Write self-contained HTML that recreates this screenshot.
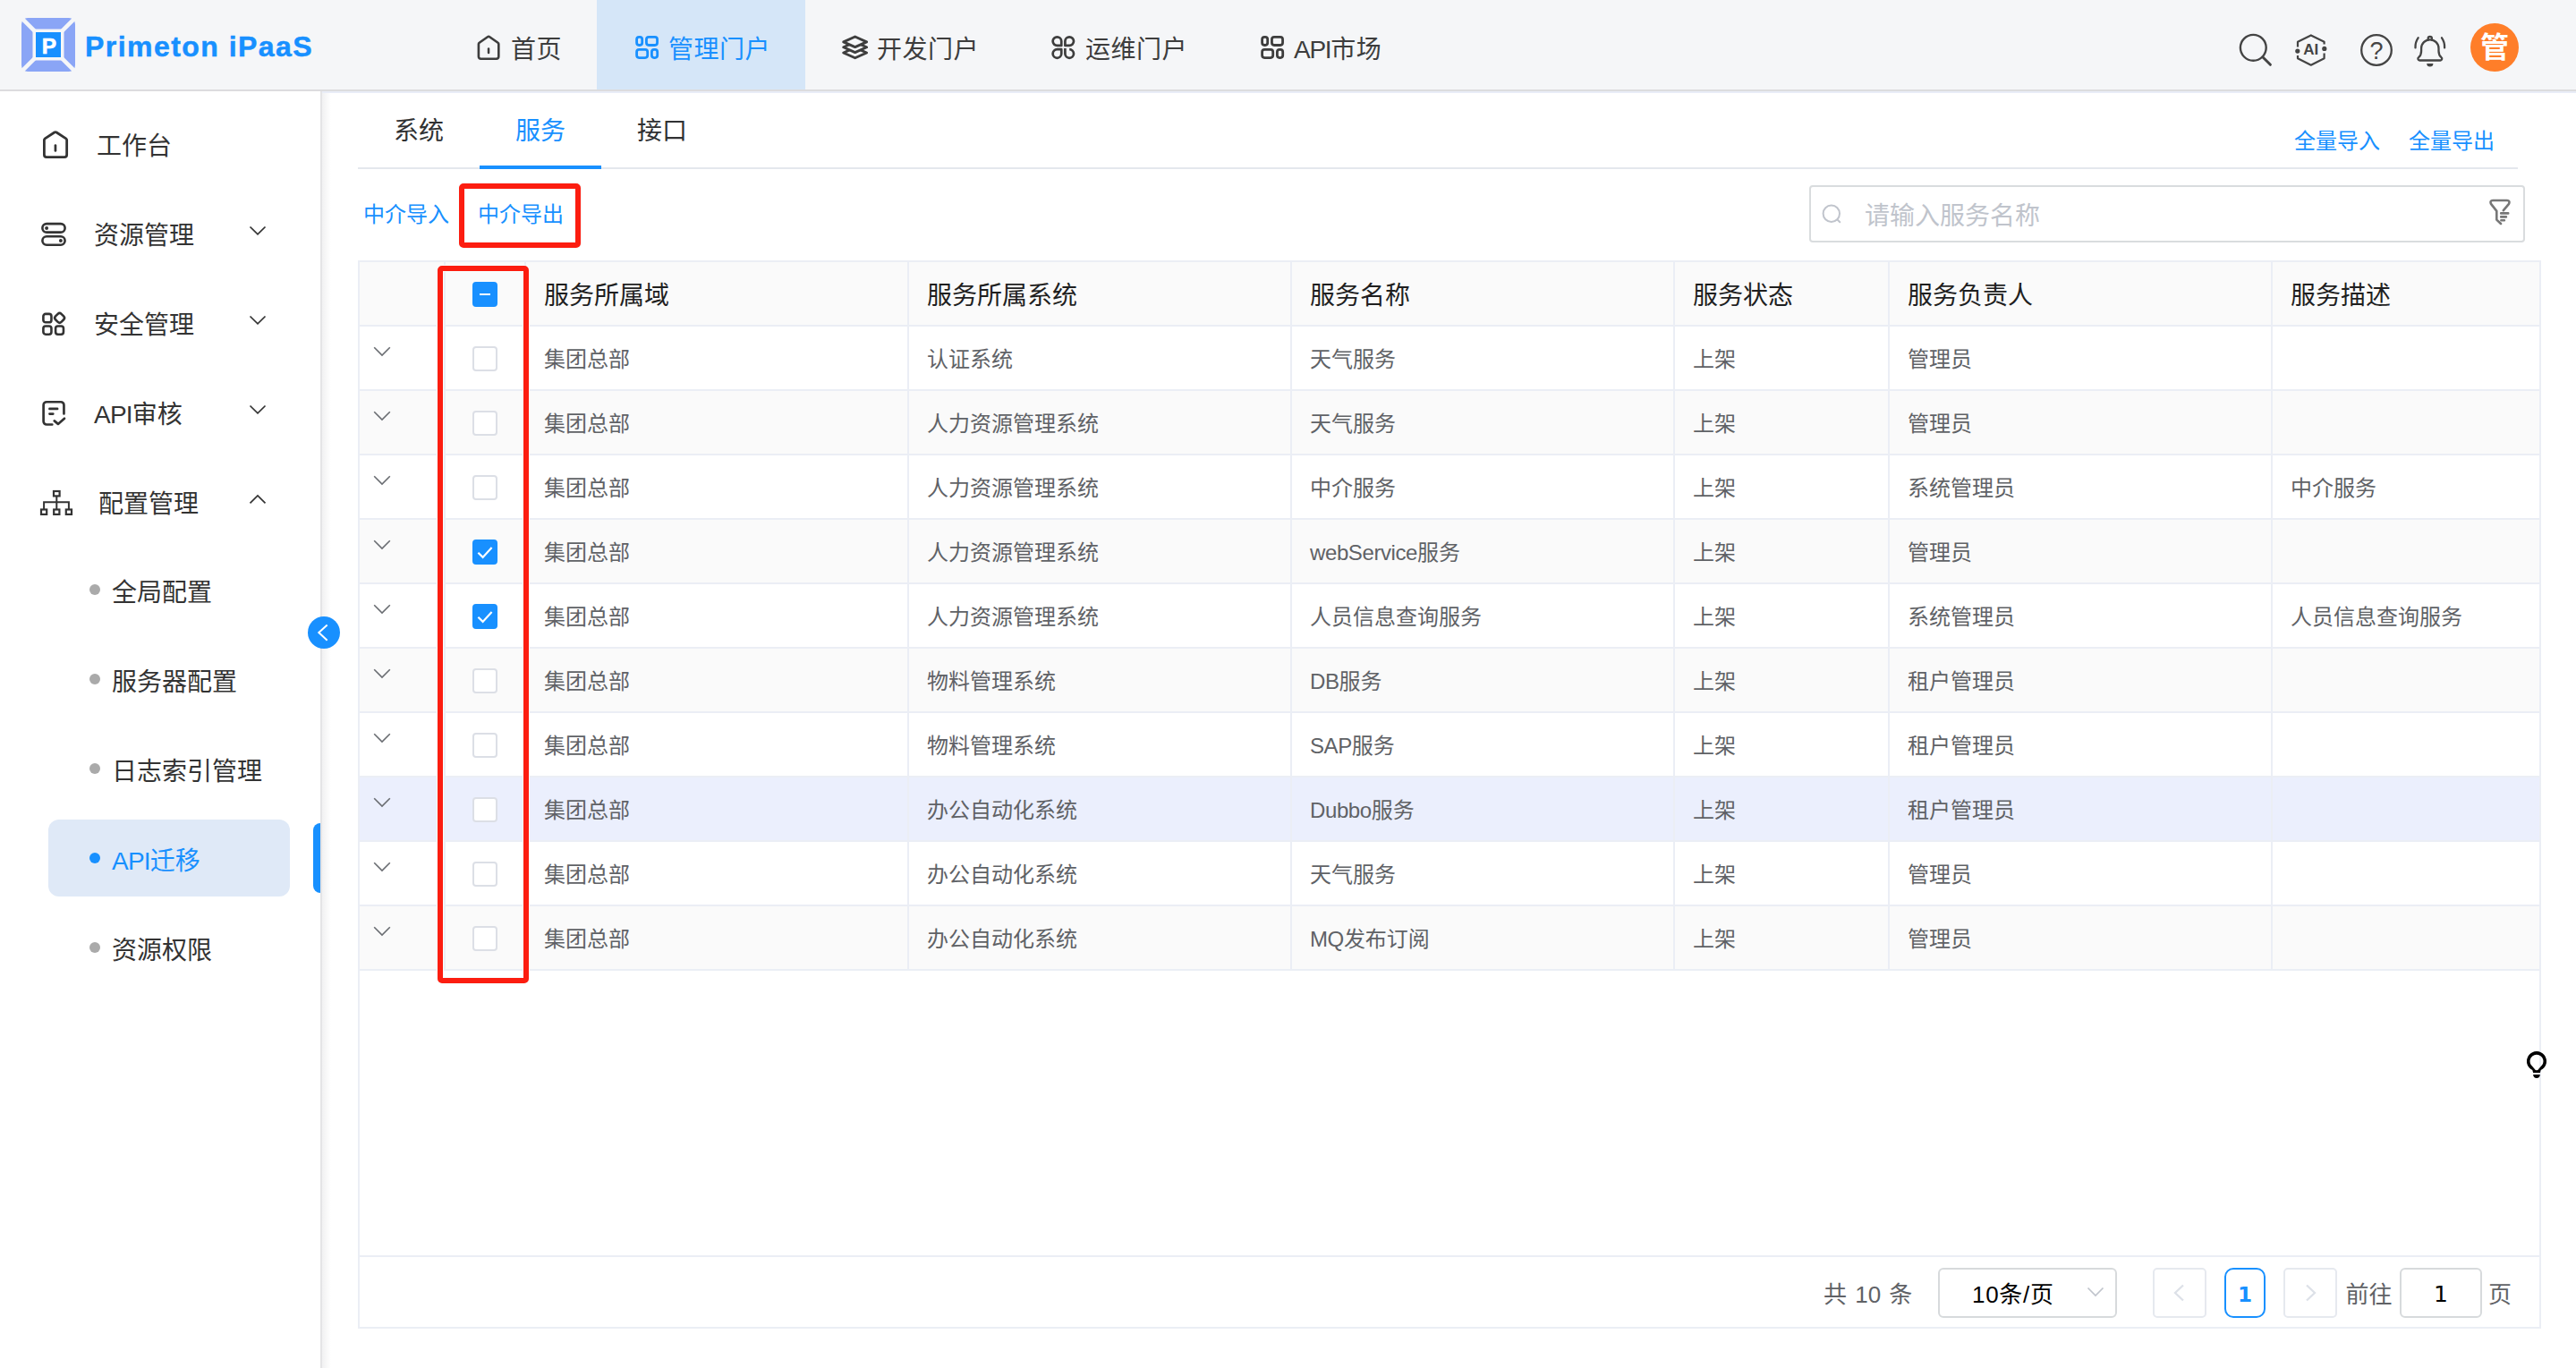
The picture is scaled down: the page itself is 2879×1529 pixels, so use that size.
<!DOCTYPE html>
<html lang="zh-CN">
<head>
<meta charset="utf-8">
<title>Primeton iPaaS</title>
<style>
*{box-sizing:border-box;margin:0;padding:0}
html,body{width:2879px;height:1529px;overflow:hidden;background:#fff}
body{font-family:"Liberation Sans","Noto Sans CJK SC",sans-serif;color:#333;position:relative}
.abs{position:absolute}
#hd{position:absolute;left:0;top:0;width:2879px;height:102px;background:#f5f6f8;border-bottom:2px solid #dcdcde}
#logo{position:absolute;left:24px;top:20px;width:60px;height:60px}
#brand{position:absolute;left:95px;top:27px;height:50px;line-height:50px;font-size:32px;font-weight:bold;color:#1890ff;white-space:nowrap;letter-spacing:1.45px;-webkit-text-stroke:0.5px #1890ff}
.nav{position:absolute;top:0;height:100px;line-height:100px;font-size:28px;color:#3d3d3d;white-space:nowrap}
.nav svg{position:absolute;top:38px;left:41px;width:28px;height:30px;overflow:visible}
.nav span{position:absolute;left:80px;top:6px;letter-spacing:0.5px}
.nav.on{background:#d5e6f8;color:#1890ff}
#sb{position:absolute;left:0;top:102px;width:360px;height:1427px;background:#fff;border-right:2px solid #e4e4e6}
.mi{position:absolute;left:0;width:358px;height:100px;line-height:100px;font-size:28px;color:#333;white-space:nowrap}
.mi .t{position:absolute;left:105px;top:1.5px}
.mi svg.ic{position:absolute;left:44px;top:34px;width:32px;height:32px}
.mi svg.ar{position:absolute;left:278px;top:39.500px;width:20px;height:12px}
.si{position:absolute;left:0;width:358px;height:100px;line-height:100px;font-size:28px;color:#333;white-space:nowrap}
.si .d{position:absolute;left:100px;top:40px;width:12px;height:12px;border-radius:6px;background:#aaa}
.si .t{position:absolute;left:125px;top:0}
#mn{position:absolute;left:360px;top:102px;width:2519px;height:1427px;background:#fff}
.tab{position:absolute;top:122px;height:50px;line-height:50px;font-size:28px;color:#303133;white-space:nowrap}
.lk{position:absolute;font-size:24px;color:#1890ff;white-space:nowrap;height:40px;line-height:40px}
#tbl{position:absolute;left:400px;top:291px;width:2440px;height:1194px;border:2px solid #ebeef5;overflow:hidden;background:#fff}
.tr{position:absolute;left:0;width:2600px;height:72px;background:#fff}
.tr.th{height:72px;background:#fafafa}
.tr.st{background:#fafafa}
.tr.hv{background:#ebeffd}
.td{position:absolute;top:0;height:100%;border-right:2px solid #ebeef5;border-bottom:2px solid #ebeef5;font-size:24px;color:#606266;white-space:nowrap;overflow:hidden}
.td .tx{position:absolute;left:20px;top:1px;height:72px;line-height:72px}
.th .td{font-size:28px;color:#1f1f1f}
.th .td .tx{top:2px;height:72px;line-height:72px}
.cb{position:absolute;left:30px;top:22px;width:28px;height:28px;border:2px solid #dcdfe6;border-radius:4px;background:#fff}

.cb.on,.cb.ind{background:#1890ff;border-color:#1890ff}
.cb.on svg{position:absolute;left:-2px;top:-2px;width:28px;height:28px}
.cb.ind i{position:absolute;left:6px;top:10.800px;width:12px;height:2.500px;background:#fff}
.ex{position:absolute;left:15px;top:22px;width:20px;height:12px}
.red{position:absolute;border:6px solid #fc1d10;border-radius:5px;box-shadow:0 0 0 1px rgba(248,255,255,.9),inset 0 0 0 1px rgba(248,255,255,.9)}
#pg{position:absolute;left:0;top:1110px;width:2436px;height:80px;border-top:2px solid #ebeef5;background:#fff;font-size:26px;color:#606266}
.pb{position:absolute;top:12px;height:56px;border:2px solid #d7dadc;border-radius:6px;background:#fff}
.pt{position:absolute;top:14px;height:56px;line-height:56px;white-space:nowrap}
.la{font-weight:normal;letter-spacing:-0.400px}

</style>
</head>
<body>
<div id="hd">
  <svg id="logo" viewBox="0 0 60 60">
    <rect x="0" y="0" width="60" height="60" rx="7" fill="#8aa5f6"/>
    <path d="M0 0 L60 60 M60 0 L0 60" stroke="#f5f6f8" stroke-width="4.5"/>
    <rect x="12.5" y="12.5" width="35" height="35" fill="#f5f6f8"/>
    <rect x="16" y="16" width="28" height="28" fill="#1890ff"/>
    <text x="31" y="39.800" font-family="Liberation Sans, sans-serif" font-weight="bold" font-size="24.500" fill="#fff" stroke="#fff" stroke-width="0.6" text-anchor="middle">P</text>
  </svg>
  <div id="brand">Primeton iPaaS</div>

  <div class="nav" style="left:491px;width:176px">
    <svg viewBox="0 0 28 30"><path d="M2.900 11.300 Q2.900 10.300 3.700 9.800 L13 3.300 Q14.100 2.550 15.200 3.300 L24.500 9.800 Q25.300 10.300 25.300 11.300 V25.350 a2.400 2.400 0 0 1 -2.400 2.400 H5.300 a2.400 2.400 0 0 1 -2.400 -2.400 Z" fill="none" stroke="#3d3d3d" stroke-width="2.600" stroke-linejoin="round"/><path d="M14.050 16.500 V20.900" stroke="#3d3d3d" stroke-width="2.500" stroke-linecap="round"/></svg>
    <span>首页</span>
  </div>
  <div class="nav on" style="left:667px;width:233px">
    <svg viewBox="0 0 28 30"><g fill="none" stroke="#1890ff" stroke-width="2.800"><rect x="3.600" y="3.400" width="6.100" height="9.100" rx="2.700"/><rect x="14.450" y="3.400" width="12.100" height="9.100" rx="2.700"/><rect x="3.600" y="17.400" width="12.100" height="9.150" rx="2.700"/><rect x="20.400" y="17.400" width="6.300" height="9.150" rx="2.700"/></g></svg>
    <span>管理门户</span>
  </div>
  <div class="nav" style="left:900px;width:233px">
    <svg viewBox="0 0 28 30"><g fill="#f5f6f8" stroke="#3d3d3d" stroke-width="2.900" stroke-linejoin="round"><path d="M14.650 15.150 L27.600 20.950 L14.650 26.750 L1.700 20.950 Z"/><path d="M14.650 9.000 L27.600 14.800 L14.650 20.600 L1.700 14.800 Z"/><path d="M14.650 3.050 L27.600 8.850 L14.650 14.650 L1.700 8.850 Z"/></g></svg>
    <span>开发门户</span>
  </div>
  <div class="nav" style="left:1133px;width:233px">
    <svg viewBox="0 0 28 30"><g fill="none" stroke="#3d3d3d" stroke-width="2.700" stroke-linejoin="round"><path d="M12.250 12.900 H7.450 A4.800 4.800 0 1 1 12.250 8.100 Z"/><path d="M16.400 12.900 V8.100 A4.800 4.800 0 1 1 21.200 12.900 Z"/><path d="M12.250 17.200 V22 A4.800 4.800 0 1 1 7.450 17.200 Z"/><path d="M16.400 15.900 V22 A4.800 4.800 0 1 0 21.200 17.200"/></g></svg>
    <span>运维门户</span>
  </div>
  <div class="nav" style="left:1366px;width:233px">
    <svg viewBox="0 0 28 30"><g fill="none" stroke="#3d3d3d" stroke-width="2.800"><rect x="3.600" y="3.400" width="6.100" height="9.100" rx="2.700"/><rect x="14.450" y="3.400" width="12.100" height="9.100" rx="2.700"/><rect x="3.600" y="17.400" width="12.100" height="9.150" rx="2.700"/><rect x="20.400" y="17.400" width="6.300" height="9.150" rx="2.700"/></g></svg>
    <span><b style="font-weight:normal;letter-spacing:-1.300px">API</b>市场</span>
  </div>

  <!-- right icons -->
  <svg class="abs" style="left:2500px;top:34px;width:44px;height:44px" viewBox="0 0 44 44"><circle cx="18.3" cy="19.3" r="14.4" fill="none" stroke="#444" stroke-width="2.4"/><path d="M28.800 29.800 L37.400 38.300" stroke="#444" stroke-width="3" stroke-linecap="round"/></svg>
  <svg class="abs" style="left:2560px;top:34px;width:44px;height:44px" viewBox="0 0 44 44"><g fill="none" stroke="#444" stroke-width="2.200" stroke-linejoin="round"><path d="M8 18.500 V12.800 L22.800 5.400 L37.600 12.800 V15.500"/><path d="M37.600 25.500 V31.200 L22.800 38.700 L8 31.200 V28"/></g><circle cx="7.800" cy="23.100" r="2.600" fill="#444"/><circle cx="37.800" cy="20.400" r="2.600" fill="#444"/><text x="22.800" y="27" font-family="Liberation Sans, sans-serif" font-weight="bold" font-size="17" fill="#444" text-anchor="middle">AI</text></svg>
  <svg class="abs" style="left:2634px;top:34px;width:44px;height:44px" viewBox="0 0 44 44"><circle cx="22" cy="22" r="16.8" fill="none" stroke="#444" stroke-width="2.3"/><text x="22" y="32" font-family="Liberation Sans, sans-serif" font-size="27" fill="#444" text-anchor="middle">?</text></svg>
  <svg class="abs" style="left:2694px;top:34px;width:44px;height:44px" viewBox="0 0 44 44"><g fill="none" stroke="#444" stroke-width="2.300" stroke-linecap="round" stroke-linejoin="round"><path d="M10.300 33.500 H33.300 a1.900 1.900 0 0 0 1.200 -3.400 c-2.200 -1.800 -3 -3.600 -3 -7.100 V20 a9.700 9.700 0 0 0 -19.400 0 v3 c0 3.500 -0.800 5.300 -3 7.100 A1.900 1.900 0 0 0 10.300 33.500 Z"/><path d="M19.700 10.500 V9 a2.100 2.100 0 0 1 4.200 0 V10.500"/><path d="M8.600 8.300 a17 17 0 0 0 -3.100 11"/><path d="M35 8.300 a17 17 0 0 1 3.100 11"/></g><path d="M18.200 37 h7.200 a3.600 3.600 0 0 1 -7.200 0 Z" fill="#444"/></svg>
  <div class="abs" style="left:2761px;top:26px;width:54px;height:54px;border-radius:27px;background:#ff7e29;color:#fff;font-size:32px;font-weight:bold;line-height:54px;text-align:center">管</div>
</div>

<div id="sb">
  <div class="mi" style="top:10px">
    <svg class="ic" style="left:45px;top:32px;width:34px;height:36px" viewBox="0 0 34 36"><path d="M4.400 12.600 Q4.400 11.500 5.300 10.900 L15.800 4 Q17 3.200 18.200 4 L28.750 10.900 Q29.650 11.500 29.650 12.600 V29.100 a2.500 2.500 0 0 1 -2.500 2.500 H6.900 a2.500 2.500 0 0 1 -2.500 -2.500 Z" fill="none" stroke="#333" stroke-width="2.800" stroke-linejoin="round"/><path d="M16.950 18.500 V24.500" stroke="#333" stroke-width="2.700" stroke-linecap="round"/></svg>
    <span class="t" style="left:108px">工作台</span>
  </div>
  <div class="mi" style="top:110px">
    <svg class="ic" viewBox="0 0 32 32"><g fill="none" stroke="#333" stroke-width="2.600"><rect x="3.400" y="4.150" width="25.200" height="9.450" rx="4.720"/><rect x="3.400" y="18.300" width="25.200" height="9.450" rx="4.720"/></g><circle cx="8.100" cy="8.900" r="2" fill="#333"/><circle cx="23.900" cy="22.900" r="2" fill="#333"/></svg>
    <span class="t">资源管理</span>
    <svg class="ar" viewBox="0 0 20 12"><path d="M1.500 1.500 L10 9.800 L18.500 1.500" fill="none" stroke="#333" stroke-width="1.700"/></svg>
  </div>
  <div class="mi" style="top:210px">
    <svg class="ic" viewBox="0 0 32 32"><g fill="none" stroke="#333" stroke-width="2.600"><rect x="4.400" y="4.850" width="9.050" height="9.450" rx="2.600"/><rect x="18.050" y="4.800" width="9.100" height="9.100" rx="2.700" transform="rotate(45 22.600 9.350)"/><rect x="4.400" y="18.500" width="9.050" height="9.200" rx="2.600"/><rect x="18.100" y="18.500" width="8.850" height="9.200" rx="2.600"/></g></svg>
    <span class="t">安全管理</span>
    <svg class="ar" viewBox="0 0 20 12"><path d="M1.500 1.500 L10 9.800 L18.500 1.500" fill="none" stroke="#333" stroke-width="1.700"/></svg>
  </div>
  <div class="mi" style="top:310px">
    <svg class="ic" viewBox="0 0 32 32"><g fill="none" stroke="#333" stroke-width="2.700" stroke-linecap="round" stroke-linejoin="round"><path d="M14.300 28.500 H8.100 a3.500 3.500 0 0 1 -3.500 -3.500 V6.750 a3.500 3.500 0 0 1 3.500 -3.500 H23.950 a3.500 3.500 0 0 1 3.500 3.500 V16.500"/><path d="M11.450 10.900 H20.100 M11.450 16.600 H15.300"/><path d="M16.750 24.350 L20.900 27.900 L28 21.800"/></g></svg>
    <span class="t"><b style="font-weight:normal;letter-spacing:-0.8px">API</b>审核</span>
    <svg class="ar" viewBox="0 0 20 12"><path d="M1.500 1.500 L10 9.800 L18.500 1.500" fill="none" stroke="#333" stroke-width="1.700"/></svg>
  </div>
  <div class="mi" style="top:410px">
    <svg class="ic" style="left:43px;width:40px;top:33px;height:34px" viewBox="0 0 40 34"><g fill="none" stroke="#333" stroke-width="2.200"><rect x="17" y="4" width="6.600" height="5.400"/><rect x="3" y="24.500" width="6.200" height="5.400"/><rect x="17.200" y="24.500" width="6.200" height="5.400"/><rect x="30.800" y="24.500" width="6.200" height="5.400"/><path d="M20.300 9.400 V24.500 M6.100 24.500 V16.300 H33.900 V24.500" stroke-width="2"/></g></svg>
    <span class="t" style="left:110px">配置管理</span>
    <svg class="ar" viewBox="0 0 20 12"><path d="M1.500 10.300 L10 2 L18.500 10.300" fill="none" stroke="#333" stroke-width="1.700"/></svg>
  </div>
  <div class="si" style="top:511px"><i class="d"></i><span class="t">全局配置</span></div>
  <div class="si" style="top:611px"><i class="d"></i><span class="t">服务器配置</span></div>
  <div class="si" style="top:711px"><i class="d"></i><span class="t">日志索引管理</span></div>
  <div class="abs" style="left:54px;top:814px;width:270px;height:86px;border-radius:12px;background:#dfe9f7"></div>
  <div class="abs" style="left:350px;top:818px;width:8px;height:78px;border-radius:8px 0 0 8px;background:#1890ff"></div>
  <div class="si" style="top:811px;color:#1890ff"><i class="d" style="background:#1890ff"></i><span class="t"><b style="font-weight:normal;letter-spacing:-0.8px">API</b>迁移</span></div>
  <div class="si" style="top:911px"><i class="d"></i><span class="t">资源权限</span></div>
</div>

<div id="mn">
  <div class="abs" style="left:0;top:0;width:2519px;height:2px;background:#e9edf7"></div>
  <div class="abs" style="left:0;top:2px;width:10px;height:1425px;background:linear-gradient(90deg,#f1f1f2,#fff)"></div>
</div>

<!-- tabs -->
<div class="tab" style="left:440px">系统</div>
<div class="tab" style="left:576px;color:#1890ff">服务</div>
<div class="tab" style="left:712px">接口</div>
<div class="abs" style="left:400px;top:187px;width:2414px;height:2px;background:#e4e7ed"></div>
<div class="abs" style="left:536px;top:185px;width:136px;height:4px;background:#1890ff"></div>
<div class="lk" style="left:2564px;top:138px">全量导入</div>
<div class="lk" style="left:2692px;top:138px">全量导出</div>

<div class="lk" style="left:406px;top:220px">中介导入</div>
<div class="lk" style="left:534px;top:220px">中介导出</div>

<!-- search -->
<div class="abs" style="left:2022px;top:207px;width:800px;height:64px;border:2px solid #d9dcde;border-radius:4px;background:#fff">
  <svg class="abs" style="left:10px;top:17px;width:28px;height:28px" viewBox="0 0 28 28"><circle cx="12.800" cy="12.800" r="9.200" fill="none" stroke="#c0c4cc" stroke-width="2"/><path d="M19.500 19.500 L22.300 22.300" stroke="#c0c4cc" stroke-width="2" stroke-linecap="round"/></svg>
  <div class="abs" style="left:60px;top:3px;height:60px;line-height:60px;font-size:28px;color:#c0c4cc;white-space:nowrap">请输入服务名称</div>
  <svg class="abs" style="left:756px;top:12px;width:30px;height:34px" viewBox="0 0 30 34"><g fill="none" stroke="#777" stroke-width="2.600" stroke-linecap="round" stroke-linejoin="round"><path d="M15 29 L10.300 24.600 V14.900 L4 6.900 Q2.500 3 6 3 H22 Q25.500 3 24 6.900 L17.900 14.200"/><path d="M15.200 17.400 H23.200 M15.200 21.400 H20.900 M15.400 25.300 H18.900"/></g></svg>
</div>

<div id="tbl">
<div class="tr th" style="top:0">
<div class="td" style="left:0px;width:96px"></div>
<div class="td" style="left:96px;width:90px"><span class="cb ind"><i></i></span></div>
<div class="td" style="left:186px;width:428px"><span class="tx">服务所属域</span></div>
<div class="td" style="left:614px;width:428px"><span class="tx">服务所属系统</span></div>
<div class="td" style="left:1042px;width:428px"><span class="tx">服务名称</span></div>
<div class="td" style="left:1470px;width:240px"><span class="tx">服务状态</span></div>
<div class="td" style="left:1710px;width:428px"><span class="tx">服务负责人</span></div>
<div class="td" style="left:2138px;width:428px"><span class="tx">服务描述</span></div>
</div>
<div class="tr" style="top:72px">
<div class="td" style="left:0px;width:96px"><svg class="ex" viewBox="0 0 20 12"><path d="M1.2 1.2 L10 10 L18.8 1.2" fill="none" stroke="#6a6d72" stroke-width="1.600"/></svg></div>
<div class="td" style="left:96px;width:90px"><span class="cb"></span></div>
<div class="td" style="left:186px;width:428px"><span class="tx">集团总部</span></div>
<div class="td" style="left:614px;width:428px"><span class="tx">认证系统</span></div>
<div class="td" style="left:1042px;width:428px"><span class="tx">天气服务</span></div>
<div class="td" style="left:1470px;width:240px"><span class="tx">上架</span></div>
<div class="td" style="left:1710px;width:428px"><span class="tx">管理员</span></div>
<div class="td" style="left:2138px;width:428px"><span class="tx"></span></div>
</div>
<div class="tr st" style="top:144px">
<div class="td" style="left:0px;width:96px"><svg class="ex" viewBox="0 0 20 12"><path d="M1.2 1.2 L10 10 L18.8 1.2" fill="none" stroke="#6a6d72" stroke-width="1.600"/></svg></div>
<div class="td" style="left:96px;width:90px"><span class="cb"></span></div>
<div class="td" style="left:186px;width:428px"><span class="tx">集团总部</span></div>
<div class="td" style="left:614px;width:428px"><span class="tx">人力资源管理系统</span></div>
<div class="td" style="left:1042px;width:428px"><span class="tx">天气服务</span></div>
<div class="td" style="left:1470px;width:240px"><span class="tx">上架</span></div>
<div class="td" style="left:1710px;width:428px"><span class="tx">管理员</span></div>
<div class="td" style="left:2138px;width:428px"><span class="tx"></span></div>
</div>
<div class="tr" style="top:216px">
<div class="td" style="left:0px;width:96px"><svg class="ex" viewBox="0 0 20 12"><path d="M1.2 1.2 L10 10 L18.8 1.2" fill="none" stroke="#6a6d72" stroke-width="1.600"/></svg></div>
<div class="td" style="left:96px;width:90px"><span class="cb"></span></div>
<div class="td" style="left:186px;width:428px"><span class="tx">集团总部</span></div>
<div class="td" style="left:614px;width:428px"><span class="tx">人力资源管理系统</span></div>
<div class="td" style="left:1042px;width:428px"><span class="tx">中介服务</span></div>
<div class="td" style="left:1470px;width:240px"><span class="tx">上架</span></div>
<div class="td" style="left:1710px;width:428px"><span class="tx">系统管理员</span></div>
<div class="td" style="left:2138px;width:428px"><span class="tx">中介服务</span></div>
</div>
<div class="tr st" style="top:288px">
<div class="td" style="left:0px;width:96px"><svg class="ex" viewBox="0 0 20 12"><path d="M1.2 1.2 L10 10 L18.8 1.2" fill="none" stroke="#6a6d72" stroke-width="1.600"/></svg></div>
<div class="td" style="left:96px;width:90px"><span class="cb on"><svg viewBox="0 0 28 28"><path d="M6.400 14.700 L11.600 19.900 L21.600 8.900" fill="none" stroke="#fff" stroke-width="2.200"/></svg></span></div>
<div class="td" style="left:186px;width:428px"><span class="tx">集团总部</span></div>
<div class="td" style="left:614px;width:428px"><span class="tx">人力资源管理系统</span></div>
<div class="td" style="left:1042px;width:428px"><span class="tx"><b class="la">webService</b>服务</span></div>
<div class="td" style="left:1470px;width:240px"><span class="tx">上架</span></div>
<div class="td" style="left:1710px;width:428px"><span class="tx">管理员</span></div>
<div class="td" style="left:2138px;width:428px"><span class="tx"></span></div>
</div>
<div class="tr" style="top:360px">
<div class="td" style="left:0px;width:96px"><svg class="ex" viewBox="0 0 20 12"><path d="M1.2 1.2 L10 10 L18.8 1.2" fill="none" stroke="#6a6d72" stroke-width="1.600"/></svg></div>
<div class="td" style="left:96px;width:90px"><span class="cb on"><svg viewBox="0 0 28 28"><path d="M6.400 14.700 L11.600 19.900 L21.600 8.900" fill="none" stroke="#fff" stroke-width="2.200"/></svg></span></div>
<div class="td" style="left:186px;width:428px"><span class="tx">集团总部</span></div>
<div class="td" style="left:614px;width:428px"><span class="tx">人力资源管理系统</span></div>
<div class="td" style="left:1042px;width:428px"><span class="tx">人员信息查询服务</span></div>
<div class="td" style="left:1470px;width:240px"><span class="tx">上架</span></div>
<div class="td" style="left:1710px;width:428px"><span class="tx">系统管理员</span></div>
<div class="td" style="left:2138px;width:428px"><span class="tx">人员信息查询服务</span></div>
</div>
<div class="tr st" style="top:432px">
<div class="td" style="left:0px;width:96px"><svg class="ex" viewBox="0 0 20 12"><path d="M1.2 1.2 L10 10 L18.8 1.2" fill="none" stroke="#6a6d72" stroke-width="1.600"/></svg></div>
<div class="td" style="left:96px;width:90px"><span class="cb"></span></div>
<div class="td" style="left:186px;width:428px"><span class="tx">集团总部</span></div>
<div class="td" style="left:614px;width:428px"><span class="tx">物料管理系统</span></div>
<div class="td" style="left:1042px;width:428px"><span class="tx"><b class="la">DB</b>服务</span></div>
<div class="td" style="left:1470px;width:240px"><span class="tx">上架</span></div>
<div class="td" style="left:1710px;width:428px"><span class="tx">租户管理员</span></div>
<div class="td" style="left:2138px;width:428px"><span class="tx"></span></div>
</div>
<div class="tr" style="top:504px">
<div class="td" style="left:0px;width:96px"><svg class="ex" viewBox="0 0 20 12"><path d="M1.2 1.2 L10 10 L18.8 1.2" fill="none" stroke="#6a6d72" stroke-width="1.600"/></svg></div>
<div class="td" style="left:96px;width:90px"><span class="cb"></span></div>
<div class="td" style="left:186px;width:428px"><span class="tx">集团总部</span></div>
<div class="td" style="left:614px;width:428px"><span class="tx">物料管理系统</span></div>
<div class="td" style="left:1042px;width:428px"><span class="tx"><b class="la">SAP</b>服务</span></div>
<div class="td" style="left:1470px;width:240px"><span class="tx">上架</span></div>
<div class="td" style="left:1710px;width:428px"><span class="tx">租户管理员</span></div>
<div class="td" style="left:2138px;width:428px"><span class="tx"></span></div>
</div>
<div class="tr st hv" style="top:576px">
<div class="td" style="left:0px;width:96px"><svg class="ex" viewBox="0 0 20 12"><path d="M1.2 1.2 L10 10 L18.8 1.2" fill="none" stroke="#6a6d72" stroke-width="1.600"/></svg></div>
<div class="td" style="left:96px;width:90px"><span class="cb"></span></div>
<div class="td" style="left:186px;width:428px"><span class="tx">集团总部</span></div>
<div class="td" style="left:614px;width:428px"><span class="tx">办公自动化系统</span></div>
<div class="td" style="left:1042px;width:428px"><span class="tx"><b class="la">Dubbo</b>服务</span></div>
<div class="td" style="left:1470px;width:240px"><span class="tx">上架</span></div>
<div class="td" style="left:1710px;width:428px"><span class="tx">租户管理员</span></div>
<div class="td" style="left:2138px;width:428px"><span class="tx"></span></div>
</div>
<div class="tr" style="top:648px">
<div class="td" style="left:0px;width:96px"><svg class="ex" viewBox="0 0 20 12"><path d="M1.2 1.2 L10 10 L18.8 1.2" fill="none" stroke="#6a6d72" stroke-width="1.600"/></svg></div>
<div class="td" style="left:96px;width:90px"><span class="cb"></span></div>
<div class="td" style="left:186px;width:428px"><span class="tx">集团总部</span></div>
<div class="td" style="left:614px;width:428px"><span class="tx">办公自动化系统</span></div>
<div class="td" style="left:1042px;width:428px"><span class="tx">天气服务</span></div>
<div class="td" style="left:1470px;width:240px"><span class="tx">上架</span></div>
<div class="td" style="left:1710px;width:428px"><span class="tx">管理员</span></div>
<div class="td" style="left:2138px;width:428px"><span class="tx"></span></div>
</div>
<div class="tr st" style="top:720px">
<div class="td" style="left:0px;width:96px"><svg class="ex" viewBox="0 0 20 12"><path d="M1.2 1.2 L10 10 L18.8 1.2" fill="none" stroke="#6a6d72" stroke-width="1.600"/></svg></div>
<div class="td" style="left:96px;width:90px"><span class="cb"></span></div>
<div class="td" style="left:186px;width:428px"><span class="tx">集团总部</span></div>
<div class="td" style="left:614px;width:428px"><span class="tx">办公自动化系统</span></div>
<div class="td" style="left:1042px;width:428px"><span class="tx"><b class="la">MQ</b>发布订阅</span></div>
<div class="td" style="left:1470px;width:240px"><span class="tx">上架</span></div>
<div class="td" style="left:1710px;width:428px"><span class="tx">管理员</span></div>
<div class="td" style="left:2138px;width:428px"><span class="tx"></span></div>
</div>
  <div id="pg">
    <div class="pt" style="left:1636px;word-spacing:2px">共 10 条</div>
    <div class="pb" style="left:1764px;width:200px"></div>
    <div class="pt" style="left:1802px;color:#000;letter-spacing:0.700px">10条/页</div>
    <svg class="abs" style="left:1930px;top:33px;width:20px;height:12px" viewBox="0 0 20 12"><path d="M1.500 1.500 L10 10 L18.500 1.500" fill="none" stroke="#c0c4cc" stroke-width="1.700"/></svg>
    <div class="pb" style="left:2004px;width:60px;border-color:#e6e9ef;border-radius:5px"></div>
    <svg class="abs" style="left:2026px;top:30px;width:14px;height:20px" viewBox="0 0 14 20"><path d="M12 1.500 L3 10 L12 18.500" fill="none" stroke="#dde1e8" stroke-width="2.300"/></svg>
    <div class="pb" style="left:2084px;width:46px;border-color:#1890ff;border-radius:10px"></div>
    <div class="pt" style="left:2084px;width:46px;text-align:center;color:#1890ff;font-weight:bold;font-size:23px;font-family:'DejaVu Sans','Liberation Sans',sans-serif">1</div>
    <div class="pb" style="left:2150px;width:60px;border-color:#e6e9ef;border-radius:5px"></div>
    <svg class="abs" style="left:2174px;top:30px;width:14px;height:20px" viewBox="0 0 14 20"><path d="M2 1.500 L11 10 L2 18.500" fill="none" stroke="#dde1e8" stroke-width="2.300"/></svg>
    <div class="pt" style="left:2219.500px">前往</div>
    <div class="pb" style="left:2280px;width:92px"></div>
    <div class="pt" style="left:2280px;width:92px;text-align:center;color:#000;font-family:'DejaVu Sans','Liberation Sans',sans-serif;font-size:25px">1</div>
    <div class="pt" style="left:2379px">页</div>
  </div>
</div>

<!-- annotations -->
<div class="red" style="left:513px;top:205px;width:136px;height:72px"></div>
<div class="red" style="left:489px;top:297px;width:102px;height:802px"></div>

<!-- collapse button -->
<div class="abs" style="left:344px;top:689px;width:36px;height:36px;border-radius:18px;background:#1890ff">
  <svg class="abs" style="left:9px;top:8px;width:14px;height:20px" viewBox="0 0 14 20"><path d="M12.700 1.400 L3.300 9.900 L12.700 18.700" fill="none" stroke="#fff" stroke-width="2"/></svg>
</div>
<!-- bulb -->
<svg class="abs" style="left:2823px;top:1174px;width:26px;height:34px" viewBox="0 0 26 34"><path fill="#000" fill-rule="evenodd" d="M8.100 25 L7.300 22.100 A11.050 11.050 0 1 1 16.700 22.100 L15.900 25 Z M12 22.300 Q10.600 22.300 9.900 21 L5.600 15.900 A7.450 7.450 0 1 1 18.400 15.900 L14.100 21 Q13.400 22.300 12 22.300 Z"/><path fill="#000" d="M8.100 27 H15.800 Q15.600 31 12 31 Q8.400 31 8.100 27 Z"/></svg>
</body>
</html>
